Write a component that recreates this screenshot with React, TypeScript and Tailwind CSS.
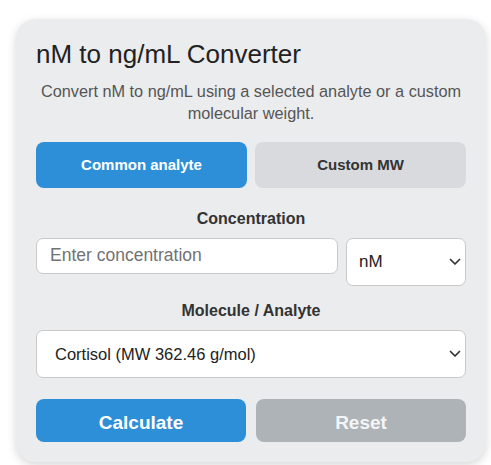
import React, {useState} from 'react';

const analytes = [
  {id: 'cortisol', name: 'Cortisol', mw: 362.46},
  {id: 'testosterone', name: 'Testosterone', mw: 288.42},
  {id: 'estradiol', name: 'Estradiol', mw: 272.38},
];

const Chevron: React.FC = () => (
  <svg
    className="pointer-events-none absolute right-[5px] top-1/2 -translate-y-1/2"
    width="12"
    height="8"
    viewBox="0 0 12 8"
    fill="none"
  >
    <path d="M1.5 1.5l4.5 4.5 4.5-4.5" stroke="#333" strokeWidth="1.7" strokeLinecap="round" strokeLinejoin="round" />
  </svg>
);

export default function App() {
  const [mode, setMode] = useState<'analyte' | 'custom'>('analyte');
  const [value, setValue] = useState('');
  const [unit, setUnit] = useState('nM');
  const [analyte, setAnalyte] = useState('cortisol');

  const reset = () => {
    setValue('');
    setUnit('nM');
    setAnalyte('cortisol');
  };

  return (
    <div className="min-h-screen bg-white pl-[16px] pt-[19px] font-['Liberation_Sans',Arial,sans-serif]">
      <div className="w-[470px] rounded-[20px] bg-[#ebeced] px-[20px] pt-[20px] pb-[20px] shadow-[0_3px_10px_rgba(0,0,0,0.16)]">
        <h1 className="text-[26px] leading-[30px] text-[#222]">nM to ng/mL Converter</h1>
        <p className="mt-[11px] text-center text-[16.3px] leading-[22px] text-[#555]">
          Convert nM to ng/mL using a selected analyte or a custom molecular weight.
        </p>

        <div className="mt-[18px] flex gap-[8px]">
          <button
            type="button"
            onClick={() => setMode('analyte')}
            className={`h-[46px] flex-1 rounded-[8px] text-[15px] font-bold ${
              mode === 'analyte' ? 'bg-[#2d8fd7] text-white' : 'bg-[#d8dadd] text-[#333]'
            }`}
          >
            Common analyte
          </button>
          <button
            type="button"
            onClick={() => setMode('custom')}
            className={`h-[46px] flex-1 rounded-[8px] text-[15px] font-bold ${
              mode === 'custom' ? 'bg-[#2d8fd7] text-white' : 'bg-[#d8dadd] text-[#333]'
            }`}
          >
            Custom MW
          </button>
        </div>

        <div className="mt-[21px] text-center text-[16px] font-bold leading-[20px] text-[#333]">Concentration</div>
        <div className="mt-[9px] flex items-start gap-[8px]">
          <input
            value={value}
            onChange={(e) => setValue(e.target.value)}
            placeholder="Enter concentration"
            className="h-[36px] min-w-0 flex-1 rounded-[7px] border border-[#c9c9c9] bg-white px-[13px] pb-[2px] text-[17.5px] text-[#222] outline-none placeholder:text-[#727272]"
          />
          <div className="relative w-[120px]">
            <select
              value={unit}
              onChange={(e) => setUnit(e.target.value)}
              className="h-[48px] w-full appearance-none rounded-[7px] border border-[#c9c9c9] bg-white pl-[12px] text-[17px] text-[#222] outline-none"
            >
              <option>nM</option>
              <option>µM</option>
              <option>pM</option>
            </select>
            <Chevron />
          </div>
        </div>

        <div className="mt-[15px] text-center text-[16px] font-bold leading-[20px] text-[#333]">Molecule / Analyte</div>
        <div className="relative mt-[9px]">
          <select
            value={analyte}
            onChange={(e) => setAnalyte(e.target.value)}
            className="h-[48px] w-full appearance-none rounded-[7px] border border-[#c9c9c9] bg-white pl-[18px] text-[16.5px] text-[#222] outline-none"
          >
            {analytes.map((a) => (
              <option key={a.id} value={a.id}>
                {a.name} (MW {a.mw} g/mol)
              </option>
            ))}
          </select>
          <Chevron />
        </div>

        <div className="mt-[21px] flex gap-[10px]">
          <button type="button" className="h-[43px] flex-1 rounded-[8px] bg-[#2d8fd7] pt-[5px] text-[19px] font-bold text-white">
            Calculate
          </button>
          <button
            type="button"
            onClick={reset}
            className="h-[43px] flex-1 rounded-[8px] bg-[#aeb3b7] pt-[5px] text-[19px] font-bold text-[#f4f5f6]"
          >
            Reset
          </button>
        </div>
      </div>
    </div>
  );
}
